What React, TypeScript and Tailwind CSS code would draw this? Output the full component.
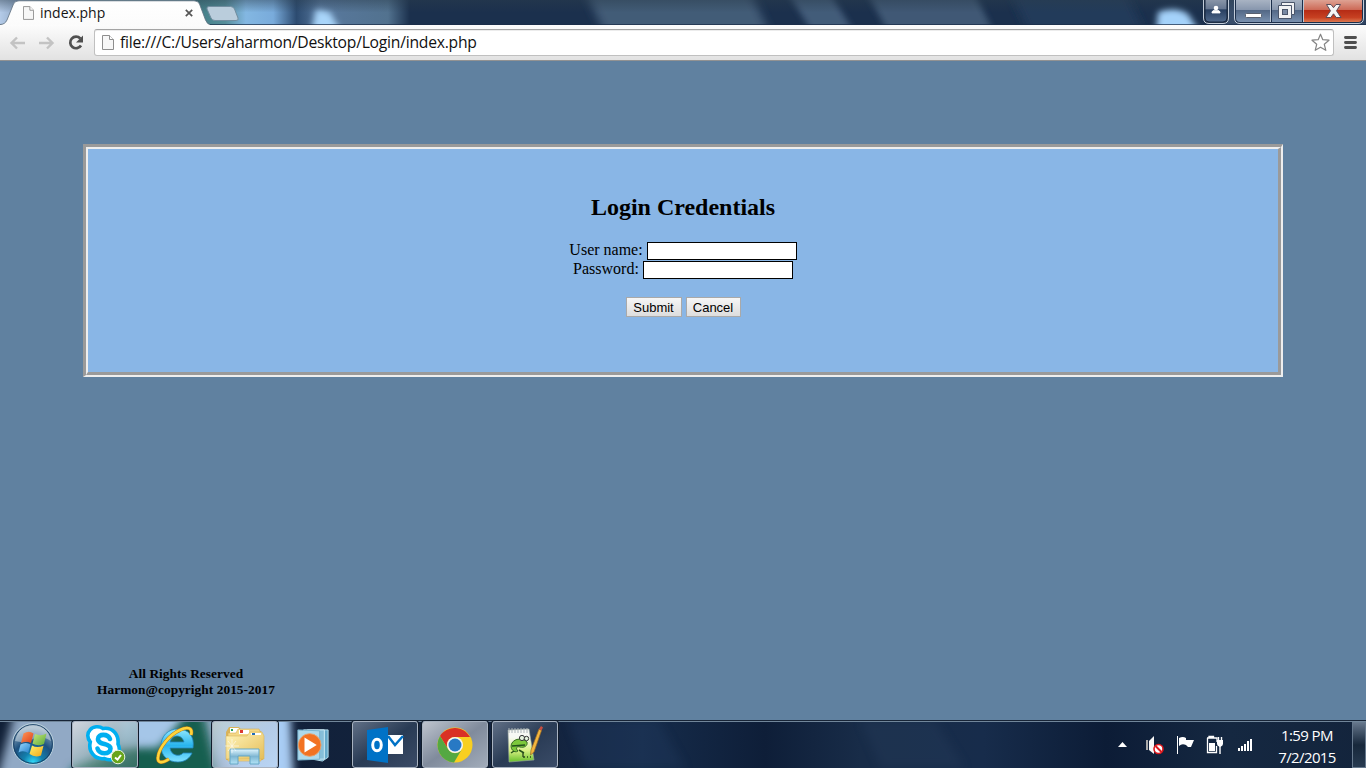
import React from "react";

function TitleGlass() {
  return (
    <svg className="absolute inset-0" width="1366" height="25" viewBox="0 0 1366 25">
      <defs>
        <linearGradient id="tg" x1="0" x2="1366" y1="0" y2="0" gradientUnits="userSpaceOnUse">
          <stop offset="0" stopColor="#b4cbe8" />
          <stop offset=".012" stopColor="#93abc9" />
          <stop offset=".03" stopColor="#5c8a98" />
          <stop offset=".14" stopColor="#3f7c83" />
          <stop offset=".165" stopColor="#568e9a" />
          <stop offset=".18" stopColor="#83b7e2" />
          <stop offset=".2" stopColor="#79abdb" />
          <stop offset=".217" stopColor="#2c4b70" />
          <stop offset=".235" stopColor="#58789d" />
          <stop offset=".284" stopColor="#52728f" />
          <stop offset=".3" stopColor="#1b304d" />
          <stop offset="1" stopColor="#1b304d" />
        </linearGradient>
        <linearGradient id="ts" x2="0" y2="1">
          <stop offset="0" stopColor="#2b3d4c" stopOpacity=".75" />
          <stop offset=".5" stopColor="#2b3d4c" stopOpacity="0" />
        </linearGradient>
        <filter id="b5" x="-40%" y="-80%" width="180%" height="260%"><feGaussianBlur stdDeviation="5" /></filter>
        <filter id="b3" x="-40%" y="-80%" width="180%" height="260%"><feGaussianBlur stdDeviation="3" /></filter>
      </defs>
      <rect width="1366" height="25" fill="url(#tg)" />
      <path d="M580-20H745L775 45H610Z" fill="#435b77" filter="url(#b5)" />
      <path d="M780-20H822L862 45H820Z" fill="#425b79" filter="url(#b3)" />
      <path d="M860-20H968L1000 45H895Z" fill="#3f5875" filter="url(#b3)" />
      <path d="M1005-20H1120L1150 45H1035Z" fill="#243b5a" filter="url(#b5)" />
      <path d="M1158 12Q1175 5 1188 14L1208 45H1155Z" fill="#a4d2fa" filter="url(#b3)" />
      <path d="M316 9L330 12L348 45H309Z" fill="#a9d5fa" filter="url(#b3)" />
      <path d="M1204-20H1366V45H1214Z" fill="#546a88" opacity=".5" filter="url(#b3)" />
      <rect width="1366" height="25" fill="url(#ts)" opacity=".6" />
      <path d="M0 24.5H1366" stroke="#1b2d48" opacity=".7" />
    </svg>
  );
}

function PageIcon({ className }: { className: string }) {
  return (
    <svg className={className} viewBox="0 0 12 15">
      <path d="M.5.5H7.5L11.5 4.5V14.5H.5Z" fill="#f7f7f7" stroke="#8e8e8e" />
      <path d="M7.5.5V4.5H11.5" fill="#fff" stroke="#8e8e8e" />
    </svg>
  );
}

function CaptionButtons() {
  return (
    <svg className="relative ml-auto mr-[2px] shrink-0" width="161" height="25" viewBox="1203 0 161 25">
      <defs>
        <linearGradient id="cg" x2="0" y2="1">
          <stop offset="0" stopColor="#8c98aa" /><stop offset=".45" stopColor="#64758f" />
          <stop offset=".46" stopColor="#283f60" /><stop offset="1" stopColor="#50698c" />
        </linearGradient>
        <linearGradient id="cg2" x2="0" y2="1">
          <stop offset="0" stopColor="#a8b3c3" /><stop offset=".45" stopColor="#8796ad" />
          <stop offset=".46" stopColor="#526785" /><stop offset="1" stopColor="#7890af" />
        </linearGradient>
        <linearGradient id="cr" x2="0" y2="1">
          <stop offset="0" stopColor="#dea293" /><stop offset=".44" stopColor="#cd6a57" />
          <stop offset=".46" stopColor="#b52b15" /><stop offset=".8" stopColor="#c74122" /><stop offset="1" stopColor="#dc7850" />
        </linearGradient>
      </defs>
      <path d="M1203.500-1V18Q1203.500 23.500 1209 23.500H1223Q1228.500 23.500 1228.500 18V-1Z" fill="#27364d" stroke="#c2ccd9" />
      <path d="M1205-1V18Q1205 22 1209 22H1223Q1227 22 1227 18V-1Z" fill="url(#cg)" stroke="#17263e" />
      <path d="M1234.500-1V18Q1234.500 23.500 1240 23.500H1358Q1363.500 23.500 1363.500 18V-1Z" fill="#1c2f4b" stroke="#c2ccd9" />
      <path d="M1236 0V18Q1236 22 1240 22H1270V0Z" fill="url(#cg2)" />
      <path d="M1272 0H1302V22H1272Z" fill="url(#cg2)" />
      <path d="M1304 0H1362V18Q1362 22 1358 22H1304Z" fill="url(#cr)" />
      <path d="M1270.500 0V22M1303.500 0V22" stroke="#bec8d5" strokeWidth="1" />
      <circle cx="1216" cy="8" r="2.300" fill="#fff" />
      <path d="M1212 13V12Q1212 10.200 1216 10.200T1220 12V13Z" fill="#fff" stroke="#fff" strokeWidth=".8" />
      <rect x="1245.500" y="13.500" width="16" height="4" rx="1" fill="#fff" stroke="#58606f" />
      <path d="M1281.500 2.500H1294.500V14.500H1291.500V18.500H1278.500V5.500H1281.500Z" fill="#f1f2f4" stroke="#4b566b" />
      <path d="M1281.500 5.500H1291.500V14.500" fill="none" stroke="#4b566b" />
      <rect x="1282.500" y="9.500" width="5" height="5" fill="#7889a3" stroke="#4b566b" />
      <path d="M1326.500 4.500H1331L1333.500 7.700L1336 4.500H1340.500L1336.500 10.800L1341 17.500H1336.200L1333.500 13.800L1330.800 17.500H1326L1330.500 10.800Z" fill="#f6f6f6" stroke="#594c59" />
    </svg>
  );
}

function BrowserTop() {
  return (
    <header>
      <div className="relative flex h-[25px] overflow-hidden">
        <TitleGlass />
        <div className="relative h-[25px] w-[210px] shrink-0">
          <svg className="absolute inset-0" width="210" height="25" viewBox="0 0 210 25">
            <defs><linearGradient id="tb" x2="0" y2="1"><stop stopColor="#fff" /><stop offset="1" stopColor="#fbfbfb" /></linearGradient></defs>
            <path d="M0 24.500Q5 24.500 7 20L13.500 4Q15 .8 19 .8H194Q198 .8 199.500 4L205.500 20Q207.500 24.500 210 24.500V26H0Z" fill="url(#tb)" stroke="#5d6f7f" strokeWidth=".8" />
          </svg>
          <div className="relative flex h-[25px] items-center pl-[23px]">
            <PageIcon className="h-[14px] w-[11px]" />
            <span className="ml-[6px] w-[145px] font-['Open_Sans','Noto_Sans',sans-serif] text-[14px] leading-[18px] text-[#151515]">index.php</span>
            <svg width="8" height="8" viewBox="0 0 8 8"><path d="M.8.8L7.200 7.200M7.200.8L.8 7.200" stroke="#555" strokeWidth="1.700" /></svg>
          </div>
        </div>
        <svg className="relative -ml-[4px] shrink-0" width="34" height="25" viewBox="206 0 34 25">
          <path d="M209 6.500H230.500Q233.500 6.500 234.500 9L238 18Q239 20.500 236 20.500H215Q212 20.500 211 18L207 9Q206.500 6.500 209 6.500Z" fill="#bacddc" stroke="#718d9f" />
        </svg>
        <CaptionButtons />
      </div>
      <div className="flex h-[36px] items-center border-b border-[#929292] bg-linear-to-b from-[#fcfcfc] to-[#e2e2e2] pl-[9px]">
        <svg width="85" height="34" viewBox="9 25 85 34" className="shrink-0">
          <path d="M25 42H11.500M17 36.500L11.500 42L17 47.500" fill="none" stroke="#c3c3c3" strokeWidth="2.400" />
          <path d="M39 42H52.500M47 36.500L52.500 42L47 47.500" fill="none" stroke="#c3c3c3" strokeWidth="2.400" />
          <path d="M80.300 37.500A5.800 5.800 0 1 0 81 44.500" fill="none" stroke="#505050" strokeWidth="2.700" />
          <path d="M83 34.500V41.500H76Z" fill="#505050" />
        </svg>
        <div className="flex h-[27px] w-[1240px] items-center rounded-[3px] border border-[#c0c0c0] border-t-[#a4a4a4] bg-white pl-[7px] shadow-[inset_0_1px_0_#ececec]">
          <PageIcon className="h-[15px] w-[12px]" />
          <span className="relative -top-px ml-[6px] font-['Open_Sans','Noto_Sans',sans-serif] text-[15.7px] leading-[20px] tracking-[-0.24px] text-[#111]">file:///C:/Users/aharmon/Desktop/Login/index.php</span>
          <svg className="ml-auto mr-[3px]" width="19" height="19" viewBox="0 0 19 19">
            <path d="M9.500 1.200L11.800 6.700L18 7.200L13.300 11.300L14.800 17.300L9.500 14.200L4.200 17.300L5.700 11.300L1 7.200L7.200 6.700Z" fill="#fff" stroke="#848484" strokeWidth="1.200" strokeLinejoin="round" />
          </svg>
        </div>
        <svg className="ml-[10px]" width="13" height="13" viewBox="0 0 13 13">
          <path d="M1.500 1.500H11.500M1.500 6.500H11.500M1.500 11.500H11.500" stroke="#4e4e4e" strokeWidth="2.900" strokeLinecap="round" />
        </svg>
      </div>
    </header>
  );
}

function LoginPage() {
  const btn = "h-[20px] border border-[#a9a9a9] bg-linear-to-b from-[#f6f6f6] to-[#dddddd] text-center font-['Liberation_Sans',sans-serif] text-[13px] leading-[17px] text-black";
  return (
    <main className="h-[659px] overflow-hidden bg-[#6081a0] pl-[83px] pt-[83px] font-['Liberation_Serif',serif] text-black">
      <section className="h-[233px] w-[1200px] border-b-2 border-l-3 border-r-2 border-t-3 border-b-[#eeeeee] border-l-[#9a9a9a] border-r-[#eeeeee] border-t-[#9a9a9a]">
        <div className="flex h-full flex-col items-center border-b-3 border-l-2 border-r-3 border-t-2 border-b-[#9a9a9a] border-l-[#eeeeee] border-r-[#9a9a9a] border-t-[#eeeeee] bg-[#89b6e6] pt-[44px]">
          <h2 className="text-[24px] font-bold leading-[28px]">Login Credentials</h2>
          <form className="mt-[20px] flex flex-col items-center">
            <label className="flex h-[19px] items-center text-[16px] leading-[18px]">
              <span className="relative -top-px">User name:</span>
              <input className="ml-[4px] h-[18px] w-[150px] border border-black bg-white" />
            </label>
            <label className="flex h-[19px] items-center text-[16px] leading-[18px]">
              <span className="relative -top-px">Password:</span>
              <input type="password" className="ml-[4px] h-[18px] w-[150px] border border-black bg-white" />
            </label>
            <div className="mt-[18px] flex gap-[4px]">
              <button type="button" className={btn + " w-[56px]"}>Submit</button>
              <button type="button" className={btn + " w-[55px]"}>Cancel</button>
            </div>
          </form>
        </div>
      </section>
      <footer className="ml-[13px] mt-[289px] w-[180px] text-center text-[13.333px] font-bold leading-[16px] tracking-[0.06px]">
        <p>All Rights Reserved</p>
        <p>Harmon@copyright 2015-2017</p>
      </footer>
    </main>
  );
}

function TaskbarGlass() {
  return (
    <svg className="absolute inset-0" width="1366" height="48" viewBox="0 720 1366 48">
      <defs>
        <linearGradient id="kb" x1="0" x2="1366" gradientUnits="userSpaceOnUse">
          <stop offset="0" stopColor="#101f36" /><stop offset=".4" stopColor="#13233e" />
          <stop offset=".47" stopColor="#162c4b" /><stop offset=".56" stopColor="#0e1e38" />
          <stop offset=".63" stopColor="#182c48" /><stop offset=".72" stopColor="#172c4b" />
          <stop offset=".81" stopColor="#0c1c36" /><stop offset=".9" stopColor="#152841" /><stop offset="1" stopColor="#13243c" />
        </linearGradient>
        <filter id="kf" x="-30%" y="-30%" width="160%" height="160%"><feGaussianBlur stdDeviation="5" /></filter>
      </defs>
      <rect y="720" width="1366" height="48" fill="url(#kb)" />
      <path d="M18 700H284L294 790H-6Z" fill="#91a9c5" filter="url(#kf)" />
      <path d="M72 768L112 752L150 743L200 700L222 790H66Z" fill="#185f50" filter="url(#kf)" />
      <path d="M120 700H196L158 748L120 744Z" fill="#a5c6e8" filter="url(#kf)" />
      <path d="M214 700H289L291 790H248L222 755Z" fill="#a9cdf5" filter="url(#kf)" />
      <path d="M568 720H658L685 768H586Z" fill="#223b5f" opacity=".35" filter="url(#kf)" />
      <path d="M860 720H935L965 768H881Z" fill="#29405f" opacity=".3" filter="url(#kf)" />
      <path d="M0 720.500H1366" stroke="#172436" />
      <path d="M0 721.500H1366" stroke="#71869a" />
    </svg>
  );
}

function StartOrb() {
  return (
    <svg width="44" height="44" viewBox="0 0 44 44">
      <defs>
        <radialGradient id="orb" cx=".5" cy=".95" r=".85">
          <stop stopColor="#31dcfb" /><stop offset=".28" stopColor="#127fac" /><stop offset=".6" stopColor="#1d5180" /><stop offset="1" stopColor="#8fa9bd" />
        </radialGradient>
        <linearGradient id="or" x2="1" y2="1"><stop stopColor="#ff9959" /><stop offset="1" stopColor="#dc3f18" /></linearGradient>
        <linearGradient id="og" x2="1" y2="1"><stop stopColor="#c6e879" /><stop offset="1" stopColor="#5ba93b" /></linearGradient>
        <linearGradient id="ob" x2="1" y2="1"><stop stopColor="#9ad9ff" /><stop offset="1" stopColor="#237fca" /></linearGradient>
        <linearGradient id="oy" x2="1" y2="1"><stop stopColor="#fff36b" /><stop offset="1" stopColor="#f2a517" /></linearGradient>
      </defs>
      <circle cx="22" cy="22" r="20.500" fill="url(#orb)" stroke="#b9cfdb" />
      <circle cx="22" cy="22" r="19.300" fill="none" stroke="#183f65" />
      <path d="M4 19Q8 3 22 3T40 19Q29 12 22 17T4 19Z" fill="#fff" opacity=".38" />
      <path d="M12.500 11.500Q18 8 22.500 11.500L20 21Q15 18.500 10 21Z" fill="url(#or)" />
      <path d="M24 12Q30 14.500 35.500 11.500L33 22Q27 24.500 21.500 21.700Z" fill="url(#og)" />
      <path d="M9.500 22.500Q15 19.500 19.500 22.500L17.200 31Q12.500 28 7.500 30.500Z" fill="url(#ob)" />
      <path d="M21 23.500Q26 26.500 32.500 23.700L30 33.500Q24 36 18.500 32Z" fill="url(#oy)" />
    </svg>
  );
}

function SkypeIcon() {
  return <svg width="42" height="40" viewBox="0 0 42 40">
    <path d="M6 5C9 1 15 1 19 3.500C29 2 35 10 34 19C37 25 35 32 29.500 34C26 35.500 22.500 34.500 20.500 33.500C10.500 35 4 26 6.300 17C3 13 3 8 6 5Z" fill="#fff" stroke="#00aff0" strokeWidth="3.600" />
    <path d="M26 14C24 8.500 14 8.500 14 14C14 20.500 26.500 17.500 26.500 23.500C26.500 30 15 29.500 13.500 23.500" fill="none" stroke="#00aff0" strokeWidth="4.600" strokeLinecap="round" />
    <circle cx="34" cy="32" r="6.800" fill="#68a51c" stroke="#e9f4df" />
    <path d="M31 32.500L33.500 34.500L37 30" stroke="white" fill="none" strokeWidth="2" />
  </svg>;
}

function IeIcon() {
  return <svg width="42" height="42" viewBox="0 0 42 42">
    <defs><linearGradient id="ie" x2="0" y2="1"><stop stopColor="#92e9ff" /><stop offset=".5" stopColor="#28b4ed" /><stop offset="1" stopColor="#81e2ff" /></linearGradient></defs>
    <path fillRule="evenodd" d="M39 24C41 12 34 5 24 5C14 5 7 12 7 22C7 32 14 38 24 38C31 38 36 34 38 29H29C26 33 17 32 16 24ZM16 18C18 10 28 10 30 18Z" fill="url(#ie)" stroke="#2386bf" strokeWidth=".8" />
    <path d="M37 11C39 4 34 2 26 6C15 11 5 24 4 33C3 40 9 39 15 35" fill="none" stroke="#b87b16" strokeWidth="3.600" />
    <path d="M37 11C39 4 34 2 26 6C15 11 5 24 4 33C3 40 9 39 15 35" fill="none" stroke="#ffd43a" strokeWidth="2.600" />
  </svg>;
}

function FolderIcon() {
  return <svg width="42" height="42" viewBox="0 0 42 42">
    <defs><linearGradient id="fo" x2="1" y2="1"><stop stopColor="#fff5bb" /><stop offset="1" stopColor="#e5bd58" /></linearGradient><linearGradient id="fs" x2="0" y2="1"><stop stopColor="#e1f6ff" /><stop offset=".5" stopColor="#7eb6d2" /><stop offset="1" stopColor="#b3e4f7" /></linearGradient></defs>
    <path d="M2 8L5 3H15L18 7H37L39 12V36H2Z" fill="#d9b359" />
    <path d="M6 4H15V9H6Z" fill="#fff" /><path d="M7 5H9V7H7Z" fill="#20a354" />
    <path d="M4 9H12L14 5H35L37 10V37H4Z" fill="#f4d887" stroke="#d6ae55" strokeWidth=".6" />
    <path d="M15 6H25V10H15Z" fill="#fff" /><path d="M16 6H19V9H16Z" fill="#db3a33" />
    <path d="M2 12H23L26 8H38L40 12V35H2Z" fill="url(#fo)" stroke="#d9b65d" strokeWidth=".6" />
    <path d="M27 9H37V11H27Z" fill="#fff" /><path d="M28 9H31V11H28Z" fill="#216cb9" />
    <path d="M6 25H35V40H26V32H14V40H6Z" fill="url(#fs)" stroke="#62a6c5" />
    <path d="M8 15V29M1 22H15M4 17L12 27M12 17L4 27" stroke="#fff" strokeWidth=".8" opacity=".7" />
  </svg>;
}

function PlayerIcon() {
  return <svg width="34" height="34" viewBox="0 0 36 36">
    <path d="M12 2H34V31L28 35L12 32Z" fill="#65a9ca" stroke="#b9e0ef" />
    <path d="M8 2H30V33H8Z" fill="#87bfd9" stroke="#d0edf7" />
    <path d="M2 2L25 3V33L2 34Z" fill="#add9ec" stroke="#77b4cf" />
    <circle cx="14.500" cy="18" r="12" fill="#f27222" stroke="#e7a16c" /><path d="M9 10V26L22 18Z" fill="white" />
  </svg>;
}

function OutlookIcon() {
  return <svg width="38" height="38" viewBox="0 0 38 38">
    <path d="M1 4L22 1V37L1 34Z" fill="#0072c6" /><path d="M22 9H37V28H22Z" fill="#fff" />
    <path d="M22 10L29 19L37 10" fill="none" stroke="#0072c6" strokeWidth="2.400" />
    <ellipse cx="11" cy="19" rx="4.300" ry="5.700" fill="none" stroke="#fff" strokeWidth="3" />
  </svg>;
}

function ChromeIcon() {
  return <svg width="36" height="36" viewBox="0 0 36 36">
    <circle cx="18" cy="18" r="17.500" fill="#f8cf20" />
    <path d="M3 9A17.500 17.500 0 0 1 33 10H18A8 8 0 0 0 11 22Z" fill="#d93025" />
    <path d="M3 9A17.500 17.500 0 0 0 17 35.500L25 22A8 8 0 0 1 11 22Z" fill="#54a842" />
    <circle cx="18" cy="18" r="8" fill="#f5f5f5" /><circle cx="18" cy="18" r="6.500" fill="#2879c4" />
  </svg>;
}

function NotepadIcon() {
  return <svg width="38" height="38" viewBox="0 0 38 38">
    <defs><linearGradient id="np" x2="0" y2="1"><stop offset=".25" stopColor="#f7f8f4" /><stop offset=".65" stopColor="#d8f083" /><stop offset="1" stopColor="#67bf2b" /></linearGradient></defs>
    <path d="M2 4L23 3L28 34L3 36Z" fill="url(#np)" stroke="#9ca9a0" strokeWidth=".6" />
    <path d="M3 2V7M6 2V7M9 2V7M12 2V7M15 2V7M18 2V7M21 2V7" stroke="#aab2b7" />
    <path d="M6 17C9 12 17 12 21 16C22 20 18 22 14 21C11 20 9 22 12 25C8 28 3 22 6 17Z" fill="#7cc83b" stroke="#376d25" />
    <path d="M6 20L19 19M8 25L5 27M13 24L18 27" stroke="#23501b" strokeWidth="1.500" />
    <circle cx="16" cy="12" r="2.600" fill="#e6f2e0" stroke="#333" /><circle cx="20.500" cy="12.500" r="2.200" fill="#e6f2e0" stroke="#333" />
    <path d="M17 27V31M17 31H19M21 31H22M24 31H25" stroke="#29451c" strokeWidth="1.300" />
    <path d="M25 24L33 3L35.500 4.500L28 26L24.500 29Z" fill="#f2b63f" stroke="#9c6821" strokeWidth=".7" /><path d="M33 3L35 0L37 1.500L35.500 4.500Z" fill="#c84e40" />
  </svg>;
}

function TaskButton({ children, tone }: { children: React.ReactNode; tone: string }) {
  return <div className={"flex h-[47px] w-[66px] shrink-0 items-center justify-center rounded-[3px] " + tone}>{children}</div>;
}

function TrayIcons() {
  return <svg className="ml-auto shrink-0" width="140" height="32" viewBox="1116 728 140 32">
    <path d="M1118 747L1122.500 742L1127 747Z" fill="#fff" />
    <path d="M1146 740H1148V750H1146Z" fill="#aaa" /><path d="M1149 741L1154 736V754L1149 750Z" fill="#f7f7f7" />
    <circle cx="1158.500" cy="749" r="4.500" fill="#fff" stroke="#dc171c" strokeWidth="1.600" /><path d="M1155.500 746L1161.500 752" stroke="#dc171c" strokeWidth="2" />
    <path d="M1177.500 736V754" stroke="#fff" /><path d="M1179 738Q1183 736 1186 738V740H1194L1191 747H1188L1186 745Q1182 743 1179 746Z" fill="#fff" />
    <path d="M1209 738V736.500H1213.500V738H1216M1207.500 738V752.500H1216.500V746M1207 738H1217V742" fill="none" stroke="#fff" strokeWidth="1.300" /><path d="M1209 743H1215V751H1209Z" fill="#fff" />
    <path d="M1220 746V754M1218.500 741V737M1221.500 741V737" fill="none" stroke="#fff" strokeWidth="1.400" /><path d="M1217 740H1223V744Q1223 746 1220 747Q1217 746 1217 744Z" fill="#fff" />
    <path d="M1238 748H1240V751H1238ZM1241 746H1243V751H1241ZM1244 744H1246V751H1244ZM1247 741H1249V751H1247ZM1250 739H1252V751H1250Z" fill="#fff" />
  </svg>;
}

function Taskbar() {
  const base = "border border-[#a8b2c0] bg-linear-to-br shadow-[0_0_0_1px_#101c2b] ";
  const dim = base + "from-[#748398]/80 via-[#33465f]/70 to-[#445571]/80";
  return (
    <nav className="relative h-[48px] overflow-hidden">
      <TaskbarGlass />
      <div className="relative flex h-[48px] items-center">
        <div className="ml-[11px] mr-[17px] shrink-0"><StartOrb /></div>
        <div className="flex h-full shrink-0 items-end gap-[4px]">
          <TaskButton tone={base + "from-[#d7dbe1]/90 via-[#a3bcb9]/50 to-[#547f78]/50"}><SkypeIcon /></TaskButton>
          <TaskButton tone=""><IeIcon /></TaskButton>
          <TaskButton tone={base + "from-[#c1d0ce]/80 via-[#b9c9de]/60 to-[#c9dcf3]/50"}><FolderIcon /></TaskButton>
          <TaskButton tone="pr-[4px]"><PlayerIcon /></TaskButton>
          <TaskButton tone={dim}><OutlookIcon /></TaskButton>
          <TaskButton tone={base + "from-[#bec4ce] via-[#808b9c] to-[#a2acba]"}><ChromeIcon /></TaskButton>
          <TaskButton tone={dim}><NotepadIcon /></TaskButton>
        </div>
        <TrayIcons />
        <div className="ml-[4px] w-[94px] shrink-0 pt-[3px] text-center font-['Open_Sans','Noto_Sans',sans-serif] text-[15px] leading-[22px] tracking-[-0.6px] text-white">
          <p>1:59 PM</p><p>7/2/2015</p>
        </div>
        <div className="ml-[-2px] mt-px h-[46px] w-[14px] shrink-0 border border-[#66798d] bg-linear-to-b from-[#64758a] via-[#17283b] to-[#283b51]" />
      </div>
    </nav>
  );
}

export default function App() {
  return <div className="h-[768px] w-[1366px] overflow-hidden"><BrowserTop /><LoginPage /><Taskbar /></div>;
}
